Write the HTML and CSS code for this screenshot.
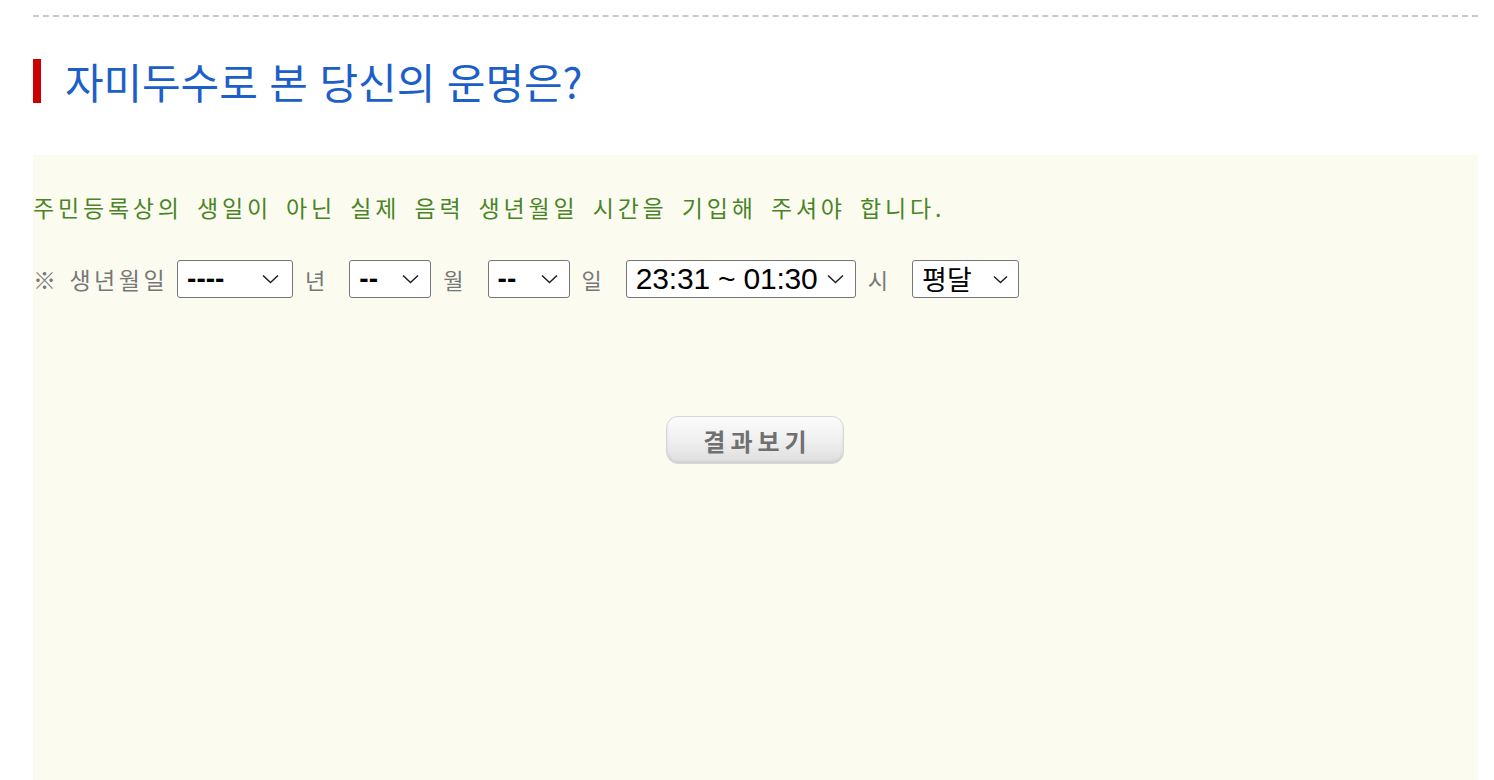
FILE: index.html
```html
<!DOCTYPE html>
<html lang="ko">
<head>
<meta charset="utf-8">
<title>자미두수</title>
<link rel="stylesheet" href="styles.css">
</head>
<body>
<div class="page">
  <div class="divider"></div>
  <h2 class="title"><span class="bar"></span>자미두수로 본 당신의 운명은?</h2>
  <div class="panel">
    <p class="notice">주민등록상의 생일이 아닌 실제 음력 생년월일 시간을 기입해 주셔야 합니다.</p>
    <div class="form-row">
      <span class="label label-first">※ 생년월일</span>
      <span class="sel-wrap">
        <select class="sel sel-year"><option>----</option></select>
        <svg class="chev" width="17" height="10" viewBox="0 0 17 10"><path d="M1 1.5 L8.5 8.5 L16 1.5" fill="none" stroke="#222" stroke-width="1.6"/></svg>
      </span>
      <span class="label">년</span>
      <span class="sel-wrap">
        <select class="sel sel-small"><option>--</option></select>
        <svg class="chev" width="17" height="10" viewBox="0 0 17 10"><path d="M1 1.5 L8.5 8.5 L16 1.5" fill="none" stroke="#222" stroke-width="1.6"/></svg>
      </span>
      <span class="label">월</span>
      <span class="sel-wrap">
        <select class="sel sel-small"><option>--</option></select>
        <svg class="chev" width="17" height="10" viewBox="0 0 17 10"><path d="M1 1.5 L8.5 8.5 L16 1.5" fill="none" stroke="#222" stroke-width="1.6"/></svg>
      </span>
      <span class="label">일</span>
      <span class="sel-wrap">
        <select class="sel sel-time"><option>23:31 ~ 01:30</option></select>
        <svg class="chev" width="17" height="10" viewBox="0 0 17 10"><path d="M1 1.5 L8.5 8.5 L16 1.5" fill="none" stroke="#222" stroke-width="1.6"/></svg>
      </span>
      <span class="label">시</span>
      <span class="sel-wrap">
        <select class="sel sel-month"><option>평달</option></select>
        <svg class="chev chev-sm" width="15" height="9" viewBox="0 0 15 9"><path d="M1 1.5 L7.5 7.5 L14 1.5" fill="none" stroke="#222" stroke-width="1.5"/></svg>
      </span>
    </div>
    <div class="actions">
      <button class="btn" type="button">결과보기</button>
    </div>
  </div>
</div>
</body>
</html>
```
FILE: styles.css
```css
html, body {
  margin: 0;
  padding: 0;
  background: #fff;
}
body {
  font-family: "Noto Sans CJK KR", "Noto Sans", sans-serif;
}
.page {
  width: 1445px;
  margin-left: 33px;
  padding-top: 15px;
}
.divider {
  border-top: 2px dashed #c8c8c8;
}
.title {
  display: flex;
  align-items: center;
  margin: 42px 0 0;
  height: 44px;
  font-size: 42px;
  font-weight: 400;
  color: #1d5fc8;
  line-height: 44px;
  letter-spacing: -0.1px;
}
.bar {
  width: 8px;
  height: 44px;
  background: #cc0000;
  margin-right: 24px;
}
.panel {
  margin-top: 52px;
  background: #fbfcef;
  height: 640px;
  padding-top: 36px;
  box-sizing: border-box;
}
.notice {
  margin: 0;
  font-size: 23px;
  line-height: 32px;
  color: #4a8428;
  letter-spacing: 3.8px;
  word-spacing: 4px;
}
.form-row {
  display: flex;
  align-items: center;
  margin-top: 37px;
  height: 38px;
}
.label {
  font-size: 22px;
  color: #777;
  letter-spacing: 2px;
  margin: 0 22px 0 12px;
  line-height: 38px;
}
.label-first {
  font-size: 23px;
  letter-spacing: 3.5px;
  margin: 0 9px 0 0;
}
.sel-wrap {
  position: relative;
  display: block;
  height: 38px;
}
.chev {
  position: absolute;
  right: 12px;
  top: 14px;
  pointer-events: none;
}
.sel-year + .chev { right: 14px; }
.chev-sm { right: 11px; top: 15px; }
.sel {
  -webkit-appearance: none;
  appearance: none;
  display: block;
  height: 38px;
  border: 1px solid #767676;
  border-radius: 3px;
  background: #fff;
  color: #000;
  font-family: "Liberation Sans", "Noto Sans CJK KR", sans-serif;
  font-size: 28px;
  padding: 0 0 0 9px;
  margin: 0;
  box-sizing: border-box;
  line-height: 36px;
}
.sel-year { width: 116px; font-weight: 700; }
.sel-small { width: 82px; font-weight: 700; }
.sel-time { width: 230px; font-size: 30px; padding-left: 9px; letter-spacing: -0.2px; }
.sel-month { width: 107px; font-family: "Noto Sans CJK KR", sans-serif; font-size: 27px; padding-left: 9px; }
.actions {
  display: flex;
  justify-content: center;
  margin-top: 118px;
  padding-right: 1px;
}
.btn {
  width: 178px;
  height: 48px;
  border: 1px solid #d6d6d6;
  border-radius: 12px;
  background: linear-gradient(#fbfbfb 0%, #f1f1f1 45%, #dedede 100%);
  color: #707070;
  font-family: "Noto Sans CJK KR", sans-serif;
  font-size: 24px;
  font-weight: 700;
  letter-spacing: 5px;
  text-indent: 5px;
  padding: 0;
  box-shadow: inset 0 -2px 2px #d0d0d0;
}
```
